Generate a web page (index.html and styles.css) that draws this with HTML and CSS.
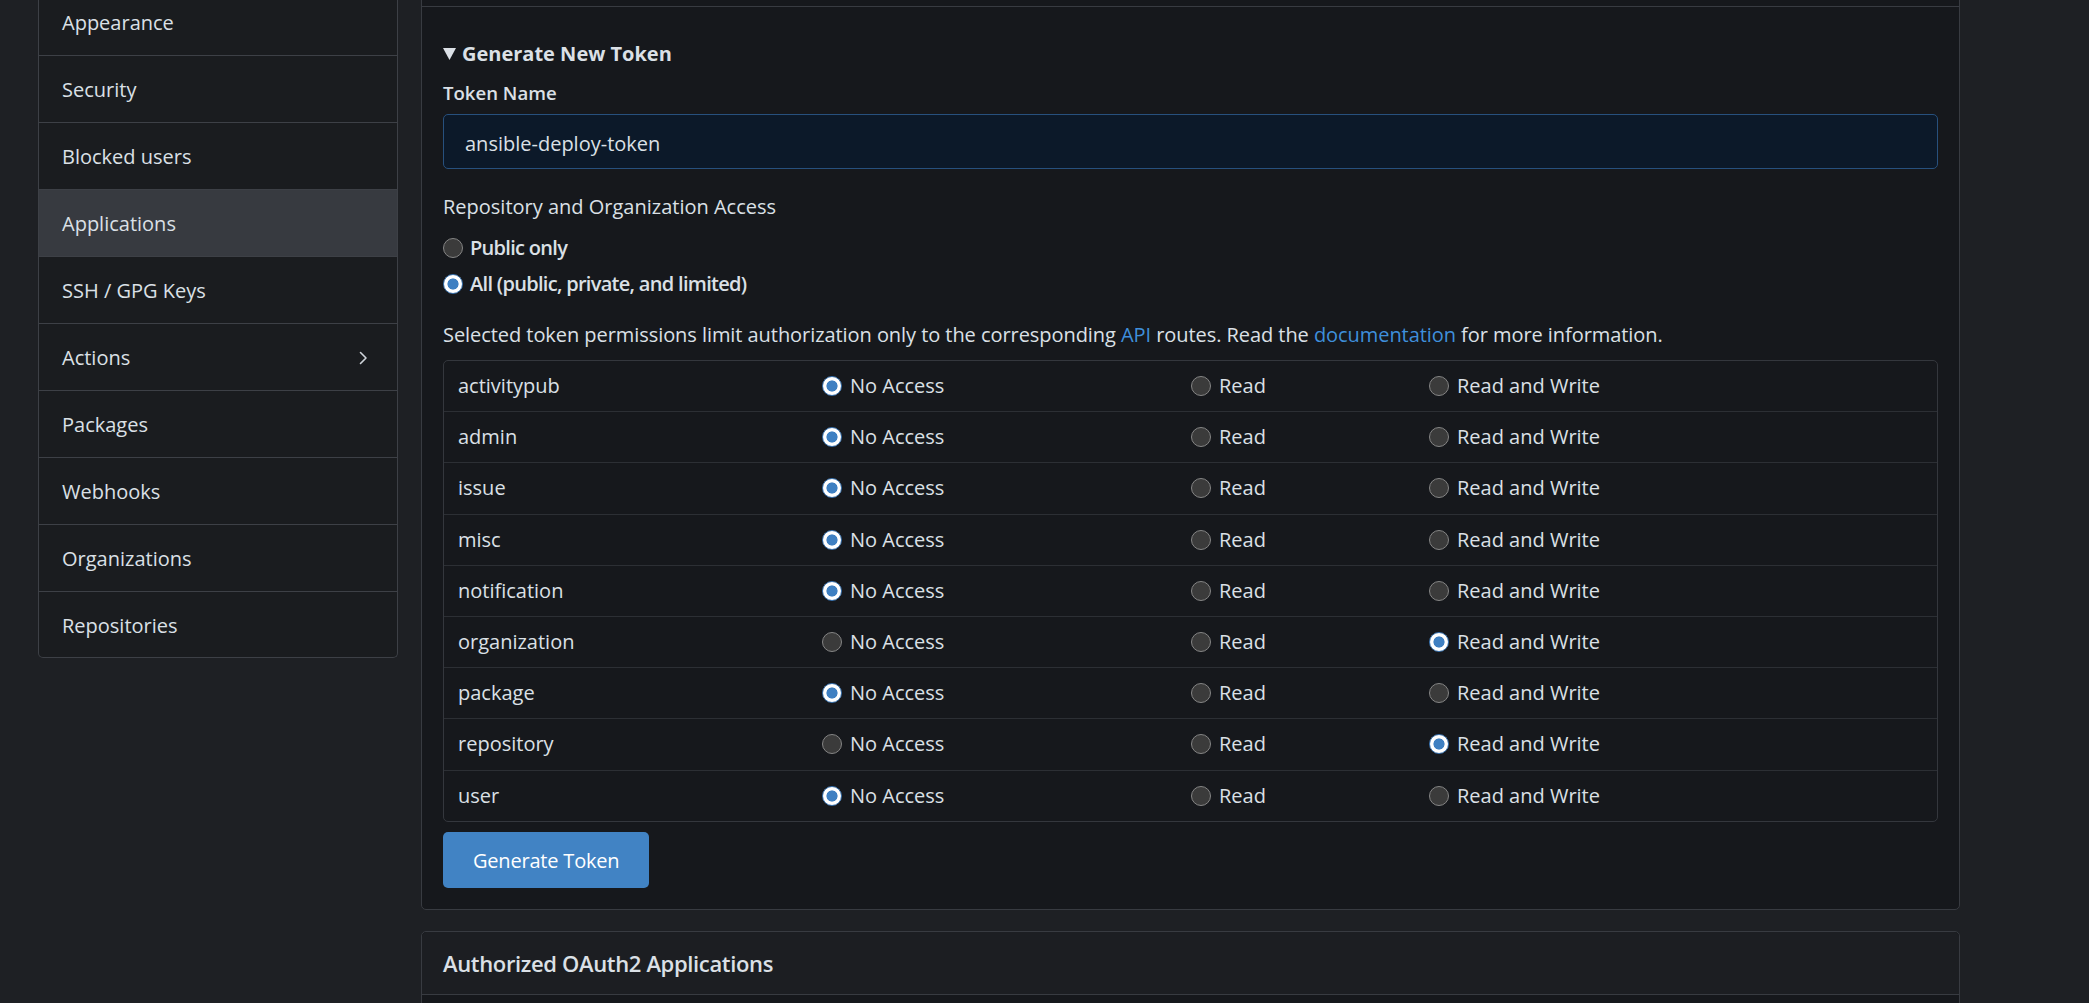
FILE: index.html
```html
<!DOCTYPE html>
<html lang="en">
<head>
<meta charset="utf-8">
<title>Applications - Settings</title>
<link rel="stylesheet" href="styles.css">
</head>
<body>
<div class="layout">
  <nav class="sidebar">
    <a class="menu-item">Appearance</a>
    <a class="menu-item">Security</a>
    <a class="menu-item">Blocked users</a>
    <a class="menu-item active">Applications</a>
    <a class="menu-item">SSH / GPG Keys</a>
    <a class="menu-item">Actions
      <svg class="chevron" width="9" height="14" viewBox="0 0 9 14"><polyline points="1.5,1.5 7,7 1.5,12.5" fill="none" stroke="#cfd4da" stroke-width="1.6" stroke-linecap="round" stroke-linejoin="round"/></svg>
    </a>
    <a class="menu-item">Packages</a>
    <a class="menu-item">Webhooks</a>
    <a class="menu-item">Organizations</a>
    <a class="menu-item last">Repositories</a>
  </nav>

  <main class="main">
    <section class="panel">
      <div class="segment-prev"></div>
      <div class="segment">
        <details open>
          <summary class="summary">
            <svg class="marker" width="13" height="12" viewBox="0 0 13 12"><polygon points="0,0 13,0 6.5,12" fill="#dbe0e6"/></svg>
            Generate New Token
          </summary>
          <form class="token-form">
            <label class="field-label">Token Name</label>
            <input class="text-input" type="text" value="ansible-deploy-token">
            <div class="access-title">Repository and Organization Access</div>
            <label class="radio-line"><input class="radio" type="radio" name="access"><span>Public only</span></label>
            <label class="radio-line second"><input class="radio" type="radio" name="access" checked><span>All (public, private, and limited)</span></label>
            <p class="help">Selected token permissions limit authorization only to the corresponding <a class="link">API</a> routes. Read the <a class="link">documentation</a> for more information.</p>

            <div class="perm-table">
              <div class="perm-row">
                <div class="cell name">activitypub</div>
                <label class="cell"><input class="radio" type="radio" name="p1" checked><span>No Access</span></label>
                <label class="cell"><input class="radio" type="radio" name="p1"><span>Read</span></label>
                <label class="cell"><input class="radio" type="radio" name="p1"><span>Read and Write</span></label>
              </div>
              <div class="perm-row">
                <div class="cell name">admin</div>
                <label class="cell"><input class="radio" type="radio" name="p2" checked><span>No Access</span></label>
                <label class="cell"><input class="radio" type="radio" name="p2"><span>Read</span></label>
                <label class="cell"><input class="radio" type="radio" name="p2"><span>Read and Write</span></label>
              </div>
              <div class="perm-row">
                <div class="cell name">issue</div>
                <label class="cell"><input class="radio" type="radio" name="p3" checked><span>No Access</span></label>
                <label class="cell"><input class="radio" type="radio" name="p3"><span>Read</span></label>
                <label class="cell"><input class="radio" type="radio" name="p3"><span>Read and Write</span></label>
              </div>
              <div class="perm-row">
                <div class="cell name">misc</div>
                <label class="cell"><input class="radio" type="radio" name="p4" checked><span>No Access</span></label>
                <label class="cell"><input class="radio" type="radio" name="p4"><span>Read</span></label>
                <label class="cell"><input class="radio" type="radio" name="p4"><span>Read and Write</span></label>
              </div>
              <div class="perm-row">
                <div class="cell name">notification</div>
                <label class="cell"><input class="radio" type="radio" name="p5" checked><span>No Access</span></label>
                <label class="cell"><input class="radio" type="radio" name="p5"><span>Read</span></label>
                <label class="cell"><input class="radio" type="radio" name="p5"><span>Read and Write</span></label>
              </div>
              <div class="perm-row">
                <div class="cell name">organization</div>
                <label class="cell"><input class="radio" type="radio" name="p6"><span>No Access</span></label>
                <label class="cell"><input class="radio" type="radio" name="p6"><span>Read</span></label>
                <label class="cell"><input class="radio" type="radio" name="p6" checked><span>Read and Write</span></label>
              </div>
              <div class="perm-row">
                <div class="cell name">package</div>
                <label class="cell"><input class="radio" type="radio" name="p7" checked><span>No Access</span></label>
                <label class="cell"><input class="radio" type="radio" name="p7"><span>Read</span></label>
                <label class="cell"><input class="radio" type="radio" name="p7"><span>Read and Write</span></label>
              </div>
              <div class="perm-row">
                <div class="cell name">repository</div>
                <label class="cell"><input class="radio" type="radio" name="p8"><span>No Access</span></label>
                <label class="cell"><input class="radio" type="radio" name="p8"><span>Read</span></label>
                <label class="cell"><input class="radio" type="radio" name="p8" checked><span>Read and Write</span></label>
              </div>
              <div class="perm-row">
                <div class="cell name">user</div>
                <label class="cell"><input class="radio" type="radio" name="p9" checked><span>No Access</span></label>
                <label class="cell"><input class="radio" type="radio" name="p9"><span>Read</span></label>
                <label class="cell"><input class="radio" type="radio" name="p9"><span>Read and Write</span></label>
              </div>
            </div>

            <button class="btn-primary" type="button">Generate Token</button>
          </form>
        </details>
      </div>
    </section>

    <section class="box">
      <h4 class="box-header">Authorized OAuth2 Applications</h4>
      <div class="box-body"></div>
    </section>
  </main>
</div>
</body>
</html>
```
FILE: styles.css
```css
html, body {
  margin: 0;
  padding: 0;
  height: 100%;
  overflow: hidden;
}

body {
  background: #1e2024;
  color: #dbe0e6;
  font-family: "Open Sans", "Noto Sans", sans-serif;
  font-size: 20px;
  line-height: 28px;
}

.layout {
  display: flex;
  align-items: flex-start;
  gap: 23px;
  padding-left: 38px;
}

/* Sidebar */
.sidebar {
  width: 360px;
  box-sizing: border-box;
  margin-top: -11px;
  display: flex;
  flex-direction: column;
  background: #1a1c1f;
  border: 1px solid #3d4046;
  border-top: none;
  border-radius: 0 0 5px 5px;
  overflow: hidden;
}

.menu-item {
  display: flex;
  align-items: center;
  justify-content: space-between;
  height: 67px;
  box-sizing: border-box;
  padding: 2px 29px 0 23px;
  border-bottom: 1px solid #3d4046;
  color: #dbe0e6;
  font-size: 20px;
}

.menu-item.last {
  border-bottom: none;
  height: 65px;
}

.menu-item.active {
  background: #373a40;
}

.chevron {
  display: block;
}

/* Main column */
.main {
  width: 1539px;
  margin-top: -40px;
  display: flex;
  flex-direction: column;
  gap: 21px;
}

.panel {
  background: #16181c;
  border: 1px solid #383b41;
  border-radius: 5px;
}

.segment-prev {
  height: 45px;
  border-bottom: 1px solid #383b41;
}

.segment {
  padding: 33px 21px 21px;
}

details {
  display: block;
}

.summary {
  display: flex;
  align-items: center;
  list-style: none;
  font-weight: 700;
  font-size: 20px;
  line-height: 28px;
  height: 28px;
  cursor: pointer;
}

.summary::-webkit-details-marker {
  display: none;
}

.marker {
  display: block;
  margin-right: 6px;
}

.token-form {
  display: flex;
  flex-direction: column;
  align-items: flex-start;
}

.field-label {
  margin-top: 12px;
  font-size: 18.6px;
  line-height: 26px;
  font-weight: 600;
}

.text-input {
  margin-top: 8px;
  width: 100%;
  height: 55px;
  box-sizing: border-box;
  padding: 3px 21px 0;
  background: #0c1929;
  border: 1px solid #27507d;
  border-radius: 5px;
  color: #dbe0e6;
  font-family: inherit;
  font-size: 20px;
  outline: none;
}

.access-title {
  margin-top: 24px;
}

.radio-line {
  display: flex;
  align-items: center;
  height: 28px;
  margin-top: 13px;
  font-weight: 600;
  letter-spacing: -0.7px;
}

.radio-line.second {
  margin-top: 8px;
}

.radio-line .radio {
  margin-right: 7px;
}

.radio {
  appearance: none;
  -webkit-appearance: none;
  width: 20px;
  height: 20px;
  margin: 0 8px 0 0;
  flex: none;
  box-sizing: border-box;
  border-radius: 50%;
  background: #3b3b3b;
  border: 1.5px solid #858585;
}

.radio:checked {
  border: 1.5px solid #3a74b1;
  background: radial-gradient(circle closest-side, #3f80c2 0, #3f80c2 5.2px, #ffffff 5.9px, #ffffff 100%);
}

.help {
  margin: 23px 0 0;
  letter-spacing: -0.06px;
}

.link {
  color: #3f8fdb;
  text-decoration: none;
}

/* Permission table */
.perm-table {
  margin-top: 11px;
  width: 100%;
  box-sizing: border-box;
  border: 1px solid #34373d;
  border-radius: 5px;
}

.perm-row {
  display: grid;
  grid-template-columns: 364px 369px 238px 1fr;
  height: 51.2px;
  box-sizing: border-box;
  border-top: 1px solid #2c2f34;
}

.perm-row:first-child {
  border-top: none;
  height: 50.2px;
}

.cell {
  display: flex;
  align-items: center;
  padding-left: 14px;
}

/* Button */
.btn-primary {
  margin-top: 10.5px;
  height: 56px;
  padding: 0 30px;
  background: #4183c4;
  color: #ffffff;
  border: none;
  border-radius: 5px;
  font-family: inherit;
  font-size: 20px;
  letter-spacing: -0.2px;
  cursor: pointer;
}

/* OAuth box */
.box {
  border: 1px solid #383b41;
  border-radius: 5px;
  background: #16181c;
}

.box-header {
  margin: 0;
  padding: 16px 21px;
  font-size: 22px;
  line-height: 30px;
  font-weight: 600;
  letter-spacing: -0.35px;
  background: #1c1e22;
  border-bottom: 1px solid #383b41;
  border-radius: 5px 5px 0 0;
}

.box-body {
  height: 60px;
}
```
